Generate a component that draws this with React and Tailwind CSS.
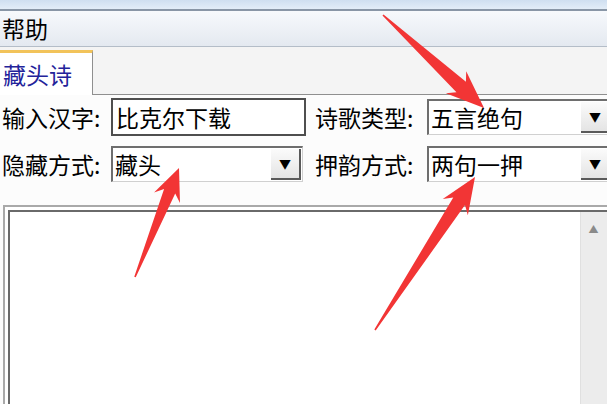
import React from "react";

const arrows = [
  { tail: [383, 15], tip: [484, 108], head: 38, half: 15, shaft: 7 },
  { tail: [135, 277], tip: [179, 168], head: 32, half: 14, shaft: 6 },
  { tail: [375, 330], tip: [475, 177], head: 36, half: 15, shaft: 7 },
];

function arrowPoints({ tail, tip, head, half, shaft }) {
  const dx = tip[0] - tail[0];
  const dy = tip[1] - tail[1];
  const len = Math.hypot(dx, dy);
  const ux = dx / len;
  const uy = dy / len;
  const nx = -uy;
  const ny = ux;
  const bx = tip[0] - ux * head;
  const by = tip[1] - uy * head;
  const jx = bx + ux * 7;
  const jy = by + uy * 7;
  const pts = [
    [tip[0], tip[1]],
    [bx + nx * half, by + ny * half],
    [jx + nx * shaft, jy + ny * shaft],
    [tail[0] + nx * 0.8, tail[1] + ny * 0.8],
    [tail[0] - nx * 0.8, tail[1] - ny * 0.8],
    [jx - nx * shaft, jy - ny * shaft],
    [bx - nx * half, by - ny * half],
  ];
  return pts.map((p) => p.join(",")).join(" ");
}

function DropButton({ className = "" }) {
  return (
    <div
      className={
        "flex items-center justify-center bg-gradient-to-b from-[#fbfbfb] to-[#e4e4e4] border-r-2 border-b-2 border-[#5a5a5a] " +
        className
      }
    >
      <span className="text-[12px] leading-none text-black">▼</span>
    </div>
  );
}

function Select({ value, className = "" }) {
  return (
    <div
      className={
        "flex h-[36px] bg-white border-t-2 border-l-2 border-[#6e6e6e] border-r border-b border-r-[#d0d0d0] border-b-[#d0d0d0] " +
        className
      }
    >
      <div className="flex-1 flex items-center pl-[2px]">{value}</div>
      <DropButton className="w-[30px] my-[1px] mr-[1px]" />
    </div>
  );
}

export default function App() {
  return (
    <div
      className="relative w-[607px] h-[404px] overflow-hidden bg-[#fcfcfc] text-black text-[23px] leading-none"
      style={{ fontFamily: '"Noto Sans CJK SC", "Noto Sans", sans-serif' }}
    >
      {/* title strip */}
      <div className="h-[11px] bg-gradient-to-b from-[#cfdff0] to-[#e3edf8] border-b-2 border-[#8996a6]" />

      {/* menu */}
      <div className="h-[36px] flex items-center pl-[2px] bg-gradient-to-b from-[#f7f9fc] to-[#e4e9f0] border-b border-[#b4bdc8]">
        帮助
      </div>

      {/* tabs */}
      <div className="flex h-[48px] bg-[#f4f4f4]">
        <div className="w-[93px] mt-[3px] bg-white border-t-[3px] border-[#f2c35a] border-r border-r-[#8f8f8f] flex items-center pl-[3px] text-[#23239a]">
          藏头诗
        </div>
        <div className="flex-1 border-b border-[#8f8f8f]" />
      </div>

      {/* form rows */}
      <div className="flex flex-col gap-[10px] pt-[3px] pl-[2px]">
        <div className="flex items-center h-[38px]">
          <span className="w-[109px]">输入汉字:</span>
          <div className="w-[195px] h-[38px] flex items-center pl-[3px] bg-white border-2 border-[#4e4e4e]">
            比克尔下载
          </div>
          <span className="ml-[9px] w-[112px]">诗歌类型:</span>
          <Select value="五言绝句" className="flex-1 -mr-[6px]" />
        </div>
        <div className="flex items-center h-[36px]">
          <span className="w-[109px]">隐藏方式:</span>
          <Select value="藏头" className="w-[192px]" />
          <span className="ml-[12px] w-[112px]">押韵方式:</span>
          <Select value="两句一押" className="flex-1 -mr-[6px]" />
        </div>
      </div>

      {/* output area */}
      <div className="mt-[23px] ml-[3px] -mr-[10px] h-[220px] border-t-2 border-l-2 border-[#a9a9a9] p-[3px] bg-white">
        <div className="h-full flex border-t-2 border-l-2 border-[#6a6a6a] bg-white">
          <div className="flex-1" />
          <div className="w-[34px] bg-[#ececec] border-l border-[#e0e0e0] flex justify-center pt-[12px]">
            <span className="text-[10px] text-[#8a8a8a] leading-none -ml-[8px]">▲</span>
          </div>
        </div>
      </div>

      {/* annotation arrows */}
      <svg className="absolute inset-0 pointer-events-none" width="607" height="404" viewBox="0 0 607 404">
        <defs>
          <filter id="soft" x="-10%" y="-10%" width="120%" height="120%">
            <feGaussianBlur stdDeviation="0.7" />
          </filter>
        </defs>
        {arrows.map((a, i) => (
          <polygon key={i} points={arrowPoints(a)} fill="#f23636" filter="url(#soft)" />
        ))}
      </svg>
    </div>
  );
}
